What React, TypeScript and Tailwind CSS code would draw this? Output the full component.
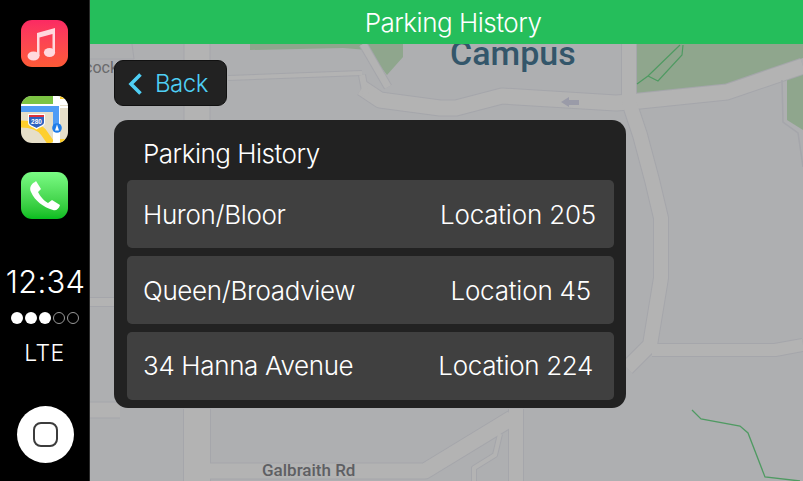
const rows = [
  { name: "Huron/Bloor", location: "Location 205", cls: "pr-[18px]", locCls: "tracking-[-0.2px]" },
  { name: "Queen/Broadview", location: "Location 45", cls: "pr-[23px]", locCls: "tracking-[-0.2px]" },
  { name: "34 Hanna Avenue", location: "Location 224", cls: "pr-[21px] pb-[2px]", locCls: "" },
];

function MusicIcon() {
  return (
    <div className="h-[47px] w-[47px] rounded-[11px] bg-gradient-to-b from-[#fb2a63] to-[#fd5a36]">
      <svg width="47" height="47" viewBox="0 0 47 47">
        <path d="M16 13 L34 8 V33 H31.5 V14 L18.5 17.5 V36 H16 Z" fill="#ffd9de" />
        <ellipse cx="12.5" cy="36" rx="6" ry="4.6" fill="#ffd9de" />
        <ellipse cx="28.5" cy="32.5" rx="5.6" ry="4.6" fill="#ffd9de" />
      </svg>
    </div>
  );
}

function MapsIcon() {
  return (
    <svg width="47" height="47" viewBox="0 0 47 47">
      <defs>
        <clipPath id="maps-clip">
          <rect width="47" height="47" rx="11" />
        </clipPath>
      </defs>
      <g clipPath="url(#maps-clip)">
        <rect width="47" height="47" fill="#e6dfc9" />
        <rect width="32" height="8" fill="#7cc444" />
        <rect y="8" width="32" height="2" fill="#fff" />
        <rect x="39" width="8" height="9" fill="#fff" />
        <rect x="39" width="5" height="3" fill="#fecf2e" />
        <path d="M0 28 C10 28 18 30 23 37 L30 47" fill="none" stroke="#fecf2e" strokeWidth="7" />
        <rect x="32" width="7" height="47" fill="#fff" />
        <rect x="39" y="10" width="8" height="2" fill="#fff" />
        <path d="M0 13 H35 V34" fill="none" stroke="#4f9cf5" strokeWidth="6" />
        <rect x="39" y="43" width="5" height="4" fill="#fecf2e" />
        <path d="M7 18 H24 V27 C24 30 19 31 15.5 33.5 C12 31 7 30 7 27 Z" fill="#fff" />
        <path d="M8 19 H23 V26.5 C23 29 18.5 30 15.5 32 C12.5 30 8 29 8 26.5 Z" fill="#2f62c0" />
        <rect x="8" y="19" width="15" height="2" fill="#e0323a" />
        <text x="15.5" y="27.5" textAnchor="middle" fill="#fff" fontSize="6.5" fontWeight="700" fontFamily="'Liberation Sans', sans-serif">280</text>
        <circle cx="36" cy="32" r="4.8" fill="#1f7ce8" />
        <path d="M36 28.5 L38 34.5 H34 Z" fill="#fff" />
      </g>
    </svg>
  );
}

function PhoneIcon() {
  return (
    <div className="h-[47px] w-[47px] rounded-[11px] bg-gradient-to-b from-[#7afc84] to-[#04bd1e]">
      <svg width="47" height="47" viewBox="0 0 47 47">
        <path
          d="M14 10 C10 12 8 16 10 20 C14 29 22 35 32 38 C35 39 38 37 39 33 L31 28 L27 31 C23 29 19 24 17 20 L20 17 L15 9 Z"
          fill="#fff"
        />
      </svg>
    </div>
  );
}

const roads: [string, number][] = [
  ["M362 88 L380 100 L440 108 L456 108 L502 96 L616 103 L630 102 L727 92 L803 66", 15],
  ["M629 44 V102 L640 135 L652 180 L661 218 L661 278 L650 345 L627 368", 14],
  ["M652 350 H775 L803 345", 12],
  ["M197 44 V120", 25],
  ["M197 409 V481", 26],
  ["M197 471 H425 L512 418", 15],
  ["M516 409 V481", 14],
  ["M90 302 H116", 8],
  ["M90 410 H120", 15],
  ["M228 78 L362 73", 4],
  ["M363 44 L388 87", 7],
  ["M362 75 L366 96", 6],
  ["M500 434 L495 455 L474 468 V481", 4],
];

function MapBackground() {
  return (
    <svg className="absolute inset-0 h-full w-full" viewBox="90 44 713 437">
      <rect x="90" y="44" width="713" height="437" fill="#aeafb1" />
      <path d="M637 44 H803 V58 L725 86 L637 94 Z" fill="#8fa68d" />
      <path d="M250 44 H403 V57 L387 75 L368 50 L343 48 L250 50 Z" fill="#8fa68d" />
      <path d="M787 78 L803 72 V130 L787 120 Z" fill="#8fa68d" />
      {roads.map(([d, width]) => (
        <path key={d} d={d} fill="none" stroke="#a5a6ab" strokeWidth={width + 2} strokeLinejoin="round" />
      ))}
      {roads.map(([d, width]) => (
        <path key={d} d={d} fill="none" stroke="#b3b3b3" strokeWidth={width} strokeLinejoin="round" />
      ))}
      <path d="M90 59 H134 L132 44" fill="none" stroke="#a5a6ab" />
      <path d="M782 80 L783 122 L798 133 L803 167" fill="none" stroke="#a5a6ab" strokeWidth="1.5" />
      <path d="M637 84 L648 76 L680 45 M648 76 L658 81 L682 55 L683 45" fill="none" stroke="#4f9a62" strokeWidth="1.2" />
      <path d="M692 410 L701 419 L740 426 L748 433 L765 477 L800 481" fill="none" stroke="#4f9a62" strokeWidth="1.3" />
      <path d="M561 102 L569 97 V100 H579 V105 H569 V107 Z" fill="#9a9ba8" />
      <text x="450" y="65" fill="#33566a" fontSize="34" fontWeight="500" fontFamily="Roboto, sans-serif">Campus</text>
      <text x="84" y="73" fill="#6a6a6c" fontSize="16" fontFamily="Roboto, sans-serif">cock</text>
      <text x="262" y="476" fill="#5e5f63" fontSize="17" fontWeight="500" fontFamily="Roboto, sans-serif">Galbraith Rd</text>
    </svg>
  );
}

export default function App() {
  return (
    <div className="flex h-[481px] w-[803px] overflow-hidden bg-black font-['Inter',sans-serif] text-white">
      <aside className="flex w-[90px] shrink-0 flex-col items-center border-r border-[#2a2a2a] bg-black pt-[20px]">
        <div className="flex flex-col items-center gap-[29px]">
          <MusicIcon />
          <MapsIcon />
          <PhoneIcon />
        </div>
        <div className="mt-[46px] ml-[2px] text-[31px] leading-[34px] font-[350] tracking-[0.2px]">12:34</div>
        <div className="mt-[13px] flex items-center gap-[2px]">
          {[0, 1, 2].map((i) => (
            <span key={i} className="h-[12px] w-[12px] rounded-full bg-white" />
          ))}
          {[3, 4].map((i) => (
            <span key={i} className="h-[12px] w-[12px] rounded-full border border-[#999]" />
          ))}
        </div>
        <div className="mt-[15px] text-[23px] leading-[28px] font-light tracking-[0.5px]">LTE</div>
        <div className="mt-[39px] ml-[2px] flex h-[57px] w-[57px] items-center justify-center rounded-full bg-white">
          <div className="h-[25px] w-[25px] rounded-[8px] border-2 border-[#3c3c3c]" />
        </div>
      </aside>

      <main className="flex min-w-0 flex-1 flex-col">
        <header className="z-10 flex h-[44px] items-center justify-center bg-[#25be5b] pl-[13px] text-[26px] font-[350] tracking-[-0.5px]">
          Parking History
        </header>
        <section className="relative flex-1 pt-[16px] pl-[24px]">
          <MapBackground />
          <div className="relative flex w-[512px] flex-col">
            <button className="flex h-[46px] w-[113px] items-center gap-[12px] rounded-[9px] border border-[#111] bg-[#222] pl-[12px] text-[24px] font-[350] tracking-[-0.5px] text-[#4fcff5]">
              <svg width="16" height="24" viewBox="0 0 16 24" className="mt-[1px]">
                <path d="M13.5 2.5 L4 12 L13.5 21.5" fill="none" stroke="#4fcff5" strokeWidth="3.6" />
              </svg>
              <span className="pt-[2px]">Back</span>
            </button>
            <div className="mt-[14px] rounded-[14px] bg-[#222] pr-[12px] pb-[8px] pl-[13px]">
              <div className="flex h-[60px] items-center pt-[6px] pl-[16px] text-[26px] font-[350] tracking-[-0.5px]">
                Parking History
              </div>
              <div className="flex flex-col gap-[8px]">
                {rows.map((row) => (
                  <div
                    key={row.name}
                    className={`flex h-[68px] items-center justify-between rounded-[5px] bg-[#404040] pl-[16px] text-[26px] font-[350] tracking-[-0.35px] ${row.cls}`}
                  >
                    <span>{row.name}</span>
                    <span className={row.locCls}>{row.location}</span>
                  </div>
                ))}
              </div>
            </div>
          </div>
        </section>
      </main>
    </div>
  );
}
